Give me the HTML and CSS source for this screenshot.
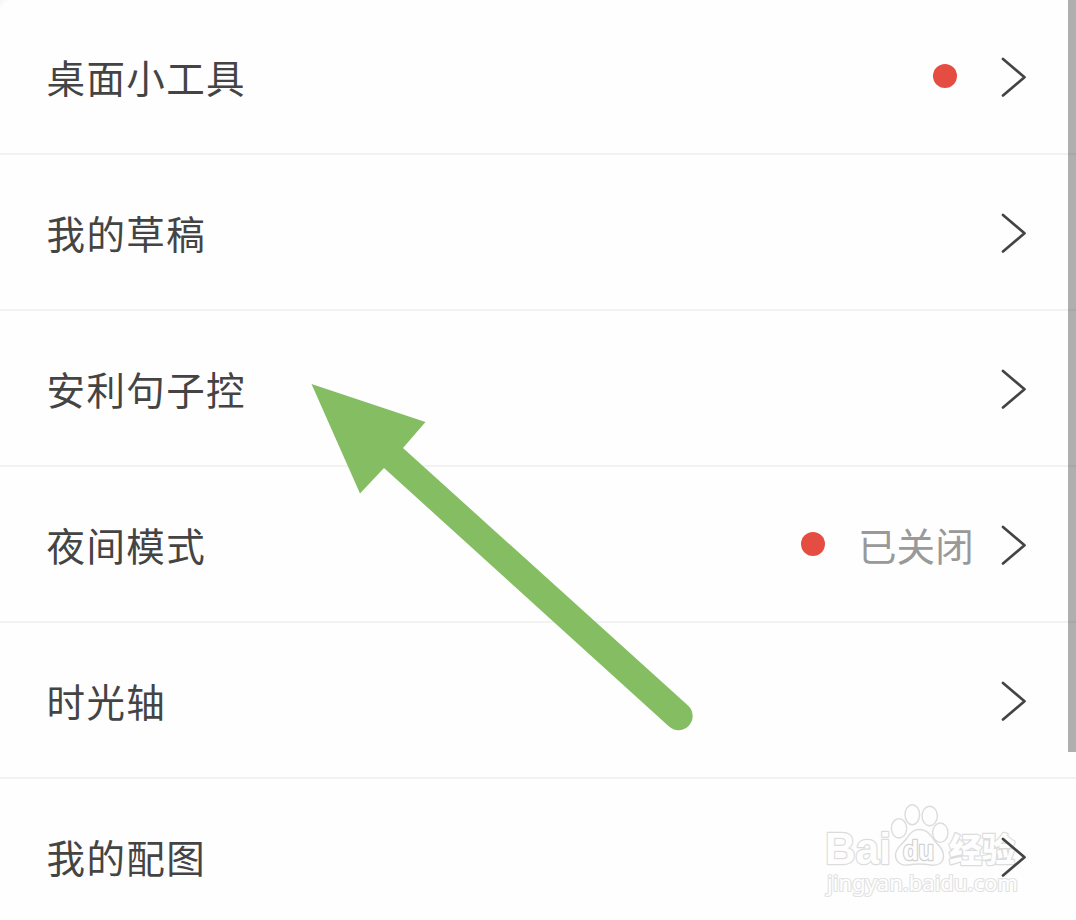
FILE: index.html
```html
<!DOCTYPE html>
<html lang="zh-CN">
<head>
    <meta charset="UTF-8">
    <meta name="viewport" content="width=device-width, initial-scale=1.0">
    <title>设置</title>
    <link rel="stylesheet" href="styles.css">
</head>
<body>
    <svg width="0" height="0" class="defs">
        <symbol id="chevron" viewBox="0 0 26 40">
            <path d="M3 2 L24.5 20.3 L3 38.5" />
        </symbol>
    </svg>

    <ul class="menu">
        <li>
            <span class="label">桌面小工具</span>
            <span class="dot"></span>
            <svg class="chevron"><use href="#chevron" /></svg>
        </li>
        <li>
            <span class="label">我的草稿</span>
            <svg class="chevron"><use href="#chevron" /></svg>
        </li>
        <li>
            <span class="label">安利句子控</span>
            <svg class="chevron"><use href="#chevron" /></svg>
        </li>
        <li>
            <span class="label">夜间模式</span>
            <span class="dot"></span>
            <span class="status">已关闭</span>
            <svg class="chevron"><use href="#chevron" /></svg>
        </li>
        <li>
            <span class="label">时光轴</span>
            <svg class="chevron"><use href="#chevron" /></svg>
        </li>
        <li>
            <span class="label">我的配图</span>
            <svg class="chevron"><use href="#chevron" /></svg>
        </li>
    </ul>

    <div class="corner"></div>
    <div class="scrollbar"></div>

    <!-- pointer arrow -->
    <svg class="arrow" viewBox="0 0 400 360">
        <path d="M11.5 14 L125.5 52 L103 78 L388 335.5 A14 14 0 0 1 369 356.5 L84 98 L60 123.5 Z" />
    </svg>

    <!-- watermark -->
    <svg class="watermark" viewBox="0 0 206 106">
        <text class="brand" x="1" y="74" textLength="66" lengthAdjust="spacingAndGlyphs">Bai</text>
        <ellipse cx="75" cy="38.3" rx="7.7" ry="9.7" />
        <ellipse cx="88.3" cy="24.7" rx="7.3" ry="10" />
        <ellipse cx="105.7" cy="26" rx="7.7" ry="9.7" />
        <ellipse cx="116.3" cy="42.7" rx="7.7" ry="9.7" />
        <path d="M95.5 39.5 C102 39.5 105.5 43 108.5 48 C112 54 119.5 57 119.5 66 C119.5 73 114 76 107 75 C99 73.7 92 73.7 84 75 C77 76 71.5 72 71.5 65 C71.5 57 79 54 83 48 C86 43 89 39.5 95.5 39.5 Z" />
        <text class="du" x="79" y="70" textLength="31" lengthAdjust="spacingAndGlyphs">du</text>
        <text class="cn" x="125" y="71.5" textLength="66">经验</text>
        <text class="url" x="3" y="100.5" textLength="191" lengthAdjust="spacingAndGlyphs">jingyan.baidu.com</text>
    </svg>
</body>
</html>
```
FILE: styles.css
```css
body {
    margin: 0;
    height: 920px;
    position: relative;
    overflow: hidden;
    background-color: #fefefe;
    font-family: "Noto Sans CJK SC", sans-serif;
    color: #444;
}

.defs {
    position: absolute;
}

.menu {
    list-style: none;
    margin: -1px 0 0;
    padding: 0;
}

.menu li {
    display: flex;
    align-items: center;
    box-sizing: border-box;
    height: 156px;
    padding: 2px 50px 0 46.5px;
    border-bottom: 2px solid #f2f2f2;
}

.label {
    flex: 1;
    padding-bottom: 2px;
    font-size: 38.5px;
    line-height: 56px;
    letter-spacing: 1.4px;
}

.status {
    margin-right: 26px;
    padding-bottom: 2px;
    font-size: 38.5px;
    line-height: 56px;
    letter-spacing: 0.2px;
    color: #999;
}

.dot {
    width: 24px;
    height: 24px;
    margin: 0 43px 2px 0;
    border-radius: 50%;
    background-color: #e54d42;
}

.dot + .status {
    margin-left: -10px;
}

.chevron {
    width: 26px;
    height: 40px;
    fill: none;
    stroke: #444;
    stroke-width: 2.7;
    stroke-linecap: round;
    stroke-linejoin: round;
}

.corner {
    position: absolute;
    top: 0;
    left: 0;
    width: 12px;
    height: 12px;
    background: radial-gradient(circle at 100% 100%, transparent 11px, #f7f7f7 15px);
}

.scrollbar {
    position: absolute;
    top: 0;
    right: 0;
    width: 8px;
    height: 752px;
    background-color: rgba(0, 0, 0, 0.31);
}

.arrow {
    position: absolute;
    left: 300px;
    top: 370px;
    width: 400px;
    height: 360px;
    overflow: visible;
    fill: #85be62;
}

.watermark {
    position: absolute;
    z-index: -1;
    left: 824px;
    top: 790px;
    width: 206px;
    height: 106px;
    overflow: visible;
    fill: #fefefe;
    stroke: #dcdcdc;
    stroke-width: 1.4;
}

.watermark text {
    paint-order: stroke;
    stroke-width: 2.4;
    stroke-linejoin: round;
}

.brand {
    font: bold 44px "Liberation Sans", sans-serif;
}

.watermark .du {
    font: bold 28px "Liberation Sans", sans-serif;
    stroke: #d2d2d2;
    stroke-width: 2.6;
}

.cn {
    font: 900 33px "Noto Sans CJK SC", sans-serif;
}

.watermark .url {
    font: 21px "Noto Sans", sans-serif;
    stroke: #e2e2e2;
    stroke-width: 2.2;
}
```
